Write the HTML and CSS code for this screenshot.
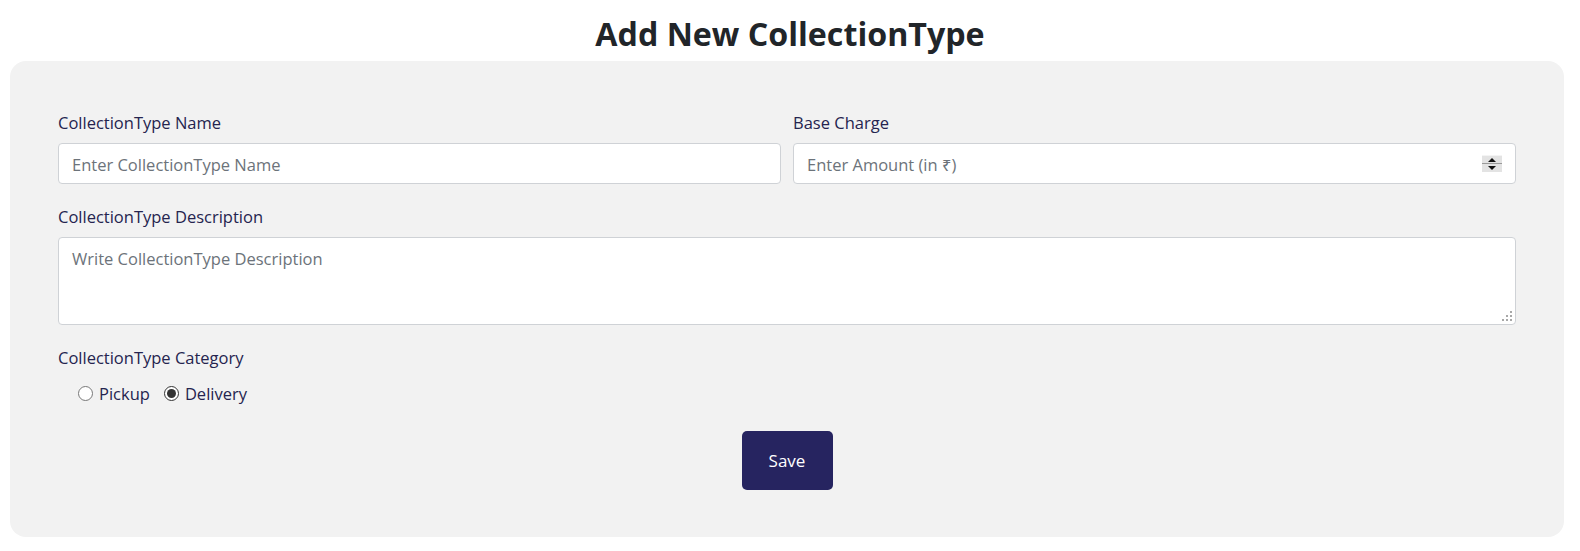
FILE: index.html
```html
<!DOCTYPE html>
<html lang="en">
<head>
<meta charset="utf-8">
<title>Add New CollectionType</title>
<link rel="stylesheet" href="styles.css">
</head>
<body>
<h1 class="page-title">Add New CollectionType</h1>
<form class="card">
  <div class="row-2">
    <div class="field">
      <label class="label" for="name">CollectionType Name</label>
      <input class="control" id="name" type="text" placeholder="Enter CollectionType Name">
    </div>
    <div class="field">
      <label class="label" for="amount">Base Charge</label>
      <div class="number-wrap">
        <input class="control" id="amount" type="text" placeholder="Enter Amount (in ₹)">
        <span class="spin" aria-hidden="true"><span class="up"></span><span class="down"></span></span>
      </div>
    </div>
  </div>
  <div class="field">
    <label class="label" for="desc">CollectionType Description</label>
    <div class="textarea-wrap">
      <textarea class="control textarea" id="desc" placeholder="Write CollectionType Description"></textarea>
      <svg class="grip" width="11" height="11" viewBox="0 0 11 11" aria-hidden="true">
        <rect x="8" y="0" width="2" height="2"/>
        <rect x="4" y="4" width="2" height="2"/>
        <rect x="8" y="4" width="2" height="2"/>
        <rect x="0" y="8" width="2" height="2"/>
        <rect x="4" y="8" width="2" height="2"/>
        <rect x="8" y="8" width="2" height="2"/>
      </svg>
    </div>
  </div>
  <div class="field">
    <span class="label">CollectionType Category</span>
    <div class="radios">
      <label class="radio"><input type="radio" name="cat"> Pickup</label>
      <label class="radio"><input type="radio" name="cat" checked> Delivery</label>
    </div>
  </div>
  <div class="actions">
    <button type="button" class="btn">Save</button>
  </div>
</form>
</body>
</html>
```

FILE: styles.css
```css
* { box-sizing: border-box; }
body {
  margin: 0;
  font-family: "Open Sans", "Noto Sans", sans-serif;
  color: #212529;
  background: #fff;
}
.page-title {
  margin: 0;
  padding-top: 12px;
  height: 61px;
  text-align: center;
  font-size: 32.2px;
  line-height: 44px;
  font-weight: 700;
  color: #212529;
}
.card {
  margin: 0 16px 0 10px;
  height: 476px;
  background: #f2f2f2;
  border-radius: 16px;
  padding: 51px 48px 0 48px;
  display: flex;
  flex-direction: column;
}
.row-2 {
  display: grid;
  grid-template-columns: 1fr 1fr;
  gap: 12px;
}
.field {
  display: flex;
  flex-direction: column;
  margin-bottom: 22px;
}
.label {
  font-size: 16.5px;
  line-height: 22px;
  color: #25244f;
  margin-bottom: 9px;
}
.control {
  width: 100%;
  height: 41px;
  border: 1px solid #cfd2d6;
  border-radius: 4px;
  background: #fff;
  padding: 1px 13px 0;
  font-family: inherit;
  font-size: 16.5px;
  color: #212529;
  outline: none;
}
.control::placeholder { color: #6c737a; }
.number-wrap { position: relative; }
.spin {
  position: absolute;
  right: 14px;
  top: 12px;
  width: 20px;
  height: 17px;
  background: #e3e3e3;
  display: flex;
  flex-direction: column;
  align-items: center;
  justify-content: space-around;
  border-top: 1px solid #f4f4f4;
}
.spin::after {
  content: "";
  position: absolute;
  left: 0; right: 0; top: 7px;
  height: 1px;
  background: #9a9a9a;
}
.spin .up {
  width: 0; height: 0;
  border-left: 4px solid transparent;
  border-right: 4px solid transparent;
  border-bottom: 4px solid #111;
}
.spin .down {
  width: 0; height: 0;
  border-left: 4px solid transparent;
  border-right: 4px solid transparent;
  border-top: 4px solid #111;
}
.textarea-wrap { position: relative; display: flex; }
.textarea {
  height: 88px;
  padding: 10px 13px;
  resize: none;
  line-height: 22px;
}
.grip {
  position: absolute;
  right: 3px;
  bottom: 3px;
  fill: #a8a8a8;
}
.radios {
  display: flex;
  align-items: center;
  gap: 14px;
  padding-left: 20px;
  margin-top: 3px;
  height: 24px;
}
.radio {
  display: flex;
  align-items: center;
  gap: 6px;
  font-size: 16.5px;
  color: #25244f;
}
.radio input {
  margin: 0;
  width: 15px;
  height: 15px;
  accent-color: #333;
}
.actions {
  display: flex;
  justify-content: center;
  margin-top: 4px;
}
.btn {
  width: 91px;
  height: 59px;
  border: none;
  border-radius: 5px;
  background: #262460;
  color: #fff;
  font-family: inherit;
  font-size: 17px;
}
```
